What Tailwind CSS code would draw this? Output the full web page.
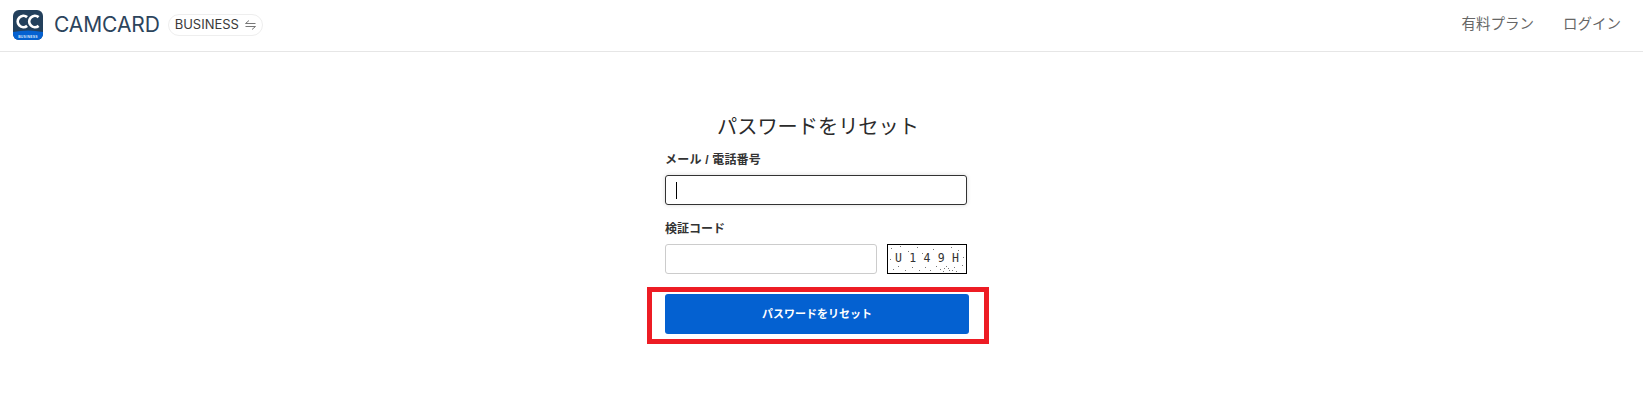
<!DOCTYPE html>
<html lang="ja">
<head>
    <meta charset="UTF-8">
    <title>パスワードをリセット</title>
    <script src="https://cdn.jsdelivr.net/npm/@tailwindcss/browser@4"></script>
</head>
<body class="bg-white font-['Liberation_Sans','Noto_Sans_CJK_JP',sans-serif] overflow-hidden">

    <header class="h-[52px] border-b border-[#e6e6e6] flex items-center justify-between pl-[13px] pr-[22px] pb-[2px]">
        <div class="flex items-center">
            <svg class="w-[30px] h-[30px]" viewBox="0 0 30 30">
                <rect width="30" height="30" rx="6" fill="#23405c"/>
                <path d="M0 22q15-3 30 0v2a6 6 0 0 1-6 6H6a6 6 0 0 1-6-6z" fill="#0461d1"/>
                <path d="M14.1 7.1A5.7 5.7 0 1 0 14.1 15.9M25.6 7.1A5.7 5.7 0 1 0 25.6 15.9" fill="none" stroke="#fff" stroke-width="2.8"/>
                <text x="15" y="27.5" text-anchor="middle" font-size="3.4" font-weight="700" fill="#dbe9fb" font-family="Liberation Sans, sans-serif" letter-spacing="0.3">BUSINESS</text>
            </svg>
            <span class="ml-[11px] text-[21px] text-[#2c445c] font-['Inter',sans-serif] tracking-[-0.1px]">CAMCARD</span>
            <span class="ml-[8px] h-[22px] w-[95px] rounded-full border border-[#eeeeee] flex items-center justify-center gap-[6px] text-[13px] text-[#3a3a3a] font-['Inter',sans-serif]">
                BUSINESS
                <svg class="w-[11px] h-[10px]" viewBox="0 0 11 10" fill="none" stroke="#777" stroke-width="1">
                    <path d="M0.5 3.5H10.5M0.5 3.5L4 0.5M10.5 6.5H0.5M10.5 6.5L7 9.5"/>
                </svg>
            </span>
        </div>
        <nav class="flex items-center gap-[29px] text-[14.5px] text-[#666666]">
            <a>有料プラン</a>
            <a>ログイン</a>
        </nav>
    </header>

    <main class="w-[342px] ml-[647px] pt-[61px]">
        <h1 class="text-[20.2px] leading-[28px] text-center text-[#2b2b2b]">パスワードをリセット</h1>
        <form class="mt-[11px]">
            <div class="px-[18px]">
                <label class="block text-[12px] leading-[16px] font-bold text-[#333333] tracking-[0.2px]">メール / 電話番号</label>
                <div class="mt-[7px] w-[302px] h-[30px] rounded-[3px] border border-[#333333] shadow-[0_0_4px_rgba(0,0,0,0.15)] flex items-center pl-[10px]">
                    <span class="w-px h-[17px] bg-black"></span>
                </div>

                <label class="block mt-[16px] text-[12px] leading-[16px] font-bold text-[#333333]">検証コード</label>
                <div class="mt-[7px] flex gap-[10px]">
                    <input class="w-[212px] h-[30px] rounded-[3px] border border-[#cccccc] bg-white">
                    <div class="relative w-[80px] h-[30px] border border-black bg-white flex items-center justify-between px-[7px] font-['DejaVu_Sans_Mono',monospace] text-[11.5px] text-[#333333] overflow-hidden">
                        <span>U</span><span>1</span><span>4</span><span>9</span><span>H</span>
                        <svg class="absolute inset-0 w-full h-full" viewBox="0 0 78 28" fill="#777">
                            <rect x="3" y="3" width="1" height="1"/><rect x="12" y="1" width="1" height="1"/><rect x="20" y="6" width="1" height="1"/><rect x="29" y="2" width="1" height="1"/><rect x="37" y="22" width="1" height="1"/><rect x="45" y="4" width="1" height="1"/><rect x="52" y="24" width="1" height="1"/><rect x="58" y="21" width="1" height="1"/><rect x="61" y="25" width="1" height="1"/><rect x="66" y="22" width="1" height="1"/><rect x="70" y="5" width="1" height="1"/><rect x="74" y="20" width="1" height="1"/><rect x="5" y="24" width="1" height="1"/><rect x="10" y="21" width="1" height="1"/><rect x="17" y="25" width="1" height="1"/><rect x="24" y="22" width="1" height="1"/><rect x="31" y="25" width="1" height="1"/><rect x="42" y="25" width="1" height="1"/><rect x="48" y="21" width="1" height="1"/><rect x="55" y="26" width="1" height="1"/><rect x="63" y="2" width="1" height="1"/><rect x="2" y="14" width="1" height="1"/><rect x="75" y="12" width="1" height="1"/><rect x="56" y="23" width="1" height="1"/><rect x="60" y="23" width="1" height="1"/><rect x="64" y="25" width="1" height="1"/><rect x="34" y="8" width="1" height="1"/><rect x="68" y="26" width="1" height="1"/>
                        </svg>
                    </div>
                </div>
            </div>
            <div class="mt-[13px] h-[57px] border-[5px] border-[#ed1c24] px-[13px] pt-[2px]">
                <button type="button" class="w-[304px] h-[40px] rounded-[3px] bg-[#0461d1] text-white text-[11px] font-bold">パスワードをリセット</button>
            </div>
        </form>
    </main>

</body>
</html>
